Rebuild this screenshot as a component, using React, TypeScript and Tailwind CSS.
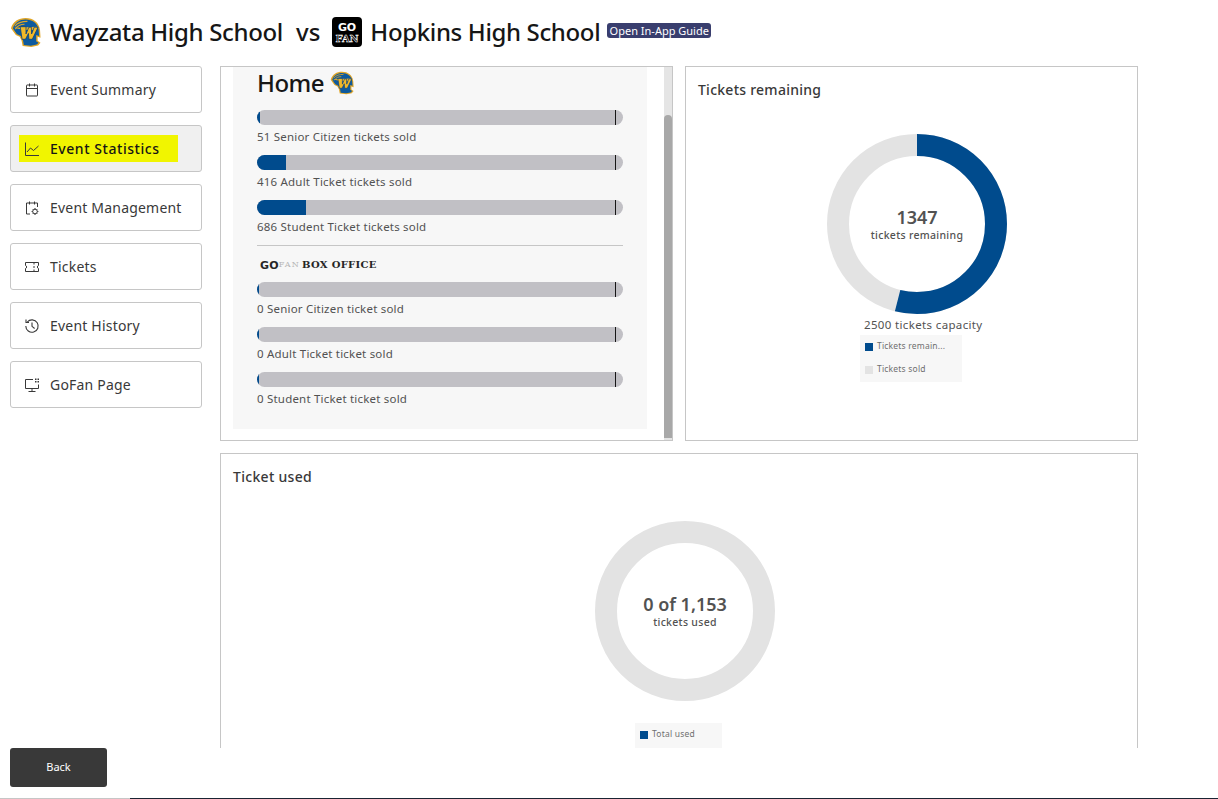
import React from "react";

const font = { fontFamily: '"Noto Sans", sans-serif' };

function Helmet({ className }: { className: string }) {
  return (
    <svg viewBox="0 0 32 31" className={className}>
      <path d="M1 11 C3 4 9 0.5 16 0.5 C24 0.5 30 5 31 13 L31.5 21 L28.5 20 L28.5 24 L31.5 26 L29 29 L22 30.5 L13 29.5 L12 24 L10 20 L6 18 L3 14 Z" fill="#e0a526" />
      <path d="M3 11 C5 5 10 2 16 2 C23 2 29 6 29.6 13 L30 19 L27 18 L27 24.5 L29.5 26 L27.5 28 L21.5 29.3 L14.3 28.4 L13.4 23.5 L11.2 19 L7 17 L4.5 13.5 Z" fill="#0d5a9e" />
      <path d="M5 9 C8 5 13 4 18 4 M5.5 12 C8 8 12 7 15 7" stroke="#e0a526" strokeWidth="1.1" fill="none" />
      <path d="M4 10.5 L28 9.5 L25 13 H14 Z" fill="#e8b02c" />
      <path d="M10.5 9.5 H16.5 L16.5 17 L19.5 10 H22 L22.3 17 L25 10 H29 L23 22.5 H19.5 L19 16.5 L16 22.5 H12.5 Z" fill="#f2b928" stroke="#0b3f78" strokeWidth="0.8" />
    </svg>
  );
}

function GoFanLogo() {
  return (
    <svg viewBox="0 0 30 30" className="w-[30px] h-[30px] shrink-0">
      <rect width="30" height="30" rx="4" fill="#000" />
      <text x="15" y="14" textAnchor="middle" fontSize="11" fontWeight="700" fill="#fff" letterSpacing="-0.3" fontFamily="DejaVu Sans, sans-serif">GO</text>
      <text x="15" y="25" textAnchor="middle" fontSize="10" fontWeight="700" fill="#000" stroke="#fff" strokeWidth="0.5" letterSpacing="-0.2" fontFamily="DejaVu Serif, serif">FAN</text>
    </svg>
  );
}

const ic = "w-4 h-4 shrink-0 text-[#393939]";

const CalendarIcon = () => (
  <svg viewBox="0 0 16 16" className={ic} fill="none" stroke="currentColor" strokeWidth="1">
    <rect x="2.5" y="3" width="11" height="11" rx="0.5" />
    <path d="M2.5 6.5 H13.5 M5.5 1.5 V4.5 M10.5 1.5 V4.5" />
  </svg>
);
const ChartIcon = () => (
  <svg viewBox="0 0 16 16" className={ic} fill="none" stroke="currentColor" strokeWidth="1">
    <path d="M1.5 1.5 V14.5 H15" />
    <path d="M3 11 L6.5 7 L9.5 9.5 L14.5 5" />
  </svg>
);
const ManageIcon = () => (
  <svg viewBox="0 0 16 16" className={ic} fill="none" stroke="currentColor" strokeWidth="1">
    <path d="M6 14 H2.5 V3 H13.5 V7" />
    <path d="M5.5 1.5 V4.5 M10.5 1.5 V4.5" />
    <circle cx="11" cy="11.5" r="2.3" />
    <path d="M11 8 V9 M11 14 V15 M7.6 11.5 H8.7 M13.3 11.5 H14.4 M8.7 9.2 L9.4 9.9 M12.6 13.1 L13.3 13.8 M8.7 13.8 L9.4 13.1 M12.6 9.9 L13.3 9.2" />
  </svg>
);
const TicketIcon = () => (
  <svg viewBox="0 0 16 16" className={ic} fill="none" stroke="currentColor" strokeWidth="1">
    <path d="M1.5 3.5 H14.5 V6.5 C13 6.7 13 9.3 14.5 9.5 V12.5 H1.5 V9.5 C3 9.3 3 6.7 1.5 6.5 Z" />
    <path d="M10 3.5 V5.5 M10 7 V9 M10 10.5 V12.5" />
  </svg>
);
const HistoryIcon = () => (
  <svg viewBox="0 0 16 16" className={ic} fill="none" stroke="currentColor" strokeWidth="1.1">
    <path d="M3.3 4 A6.2 6.2 0 1 1 1.8 8" />
    <path d="M2 1.5 V4.5 H5" />
    <path d="M8 4.5 V8.3 L10.6 10.5" />
  </svg>
);
const MonitorIcon = () => (
  <svg viewBox="0 0 16 16" className={ic} fill="none" stroke="currentColor" strokeWidth="1">
    <path d="M9 2.5 H1.5 V11.5 H14.5 V7.5" />
    <path d="M8 11.5 V14.5 M4.5 14.5 H11.5" />
    <path d="M11 1.5 H12.5 V3 H11 Z M13.5 1.5 H15 V3 H13.5 Z M11 4 H12.5 V5.5 H11 Z M13.5 4 H15 V5.5 H13.5 Z" fill="currentColor" stroke="none" />
  </svg>
);

const navItems = [
  { label: "Event Summary", icon: <CalendarIcon /> },
  { label: "Event Statistics", icon: <ChartIcon />, active: true },
  { label: "Event Management", icon: <ManageIcon /> },
  { label: "Tickets", icon: <TicketIcon /> },
  { label: "Event History", icon: <HistoryIcon /> },
  { label: "GoFan Page", icon: <MonitorIcon /> },
];

function Sidebar() {
  return (
    <nav className="w-[192px] shrink-0 flex flex-col gap-3">
      {navItems.map((it) =>
        it.active ? (
          <div key={it.label} className="h-[47px] rounded-[3px] border border-[#c6c6c6] bg-[#f0f0f0] flex items-center pl-2">
            <div className="w-[159px] h-[27px] bg-[#f1f500] flex items-center gap-[10px] pl-[5px] text-[14px] font-medium tracking-[0.55px] text-[#161616]">
              {it.icon}
              <span>{it.label}</span>
            </div>
          </div>
        ) : (
          <div key={it.label} className="h-[47px] rounded-[3px] border border-[#c6c6c6] bg-white flex items-center gap-[10px] pl-[13px] text-[14px] tracking-[0.2px] text-[#393939]">
            {it.icon}
            <span>{it.label}</span>
          </div>
        )
      )}
    </nav>
  );
}

function Bar({ pct, label }: { pct: number; label: string }) {
  return (
    <div className="h-[45px]">
      <div className="relative h-[15px] rounded-full bg-[#c1c0c5] overflow-hidden">
        <div className="h-full bg-[#004b8d]" style={{ width: `${pct}%` }} />
        <div className="absolute top-0 bottom-0 left-[358px] w-[1px] bg-[#161616]" />
      </div>
      <div className="mt-[4px] text-[11.5px] leading-[16px] tracking-[0.2px] text-[#525252] whitespace-nowrap">{label}</div>
    </div>
  );
}

function HomePanel() {
  return (
    <div className="w-[453px] h-[375px] border border-[#c6c6c6] bg-white flex overflow-hidden">
      <div className="w-[444px] pl-3">
        <div className="w-[414px] h-[362px] bg-[#f7f7f7] px-6">
          <div className="flex items-center gap-[6px] h-[32px] mb-[11px]">
            <span className="text-[24px] font-medium leading-[32px] tracking-[-0.5px] text-[#161616]">Home</span>
            <Helmet className="w-[24px] h-[24px]" />
          </div>
          <Bar pct={0.9} label="51 Senior Citizen tickets sold" />
          <Bar pct={8} label="416 Adult Ticket tickets sold" />
          <Bar pct={13.4} label="686 Student Ticket tickets sold" />
          <div className="border-t border-[#c6c6c6] pt-[11px] h-[37px]">
            <div className="flex items-center h-[16px] leading-none text-[#262626] whitespace-nowrap" style={{ fontFamily: '"DejaVu Serif", serif' }}>
              <span className="text-[11px] font-bold ml-[3px] tracking-[0.2px]" style={{ fontFamily: '"DejaVu Sans", sans-serif' }}>GO</span>
              <span className="text-[8px] text-[#b5b5b5] tracking-[1.2px]">FAN</span>
              <span className="text-[10px] font-bold ml-[2px] tracking-[0.3px]">BOX OFFICE</span>
            </div>
          </div>
          <Bar pct={0.6} label="0 Senior Citizen ticket sold" />
          <Bar pct={0.6} label="0 Adult Ticket ticket sold" />
          <Bar pct={0.6} label="0 Student Ticket ticket sold" />
        </div>
      </div>
      <div className="w-[8px] h-full bg-[#e5e5e5] flex flex-col">
        <div className="h-[48px] shrink-0" />
        <div className="h-[323px] bg-[#a8a8a8] rounded-t-[4px]" />
      </div>
    </div>
  );
}

function Donut({ fraction }: { fraction: number }) {
  const r = 79;
  const c = 2 * Math.PI * r;
  return (
    <svg viewBox="0 0 180 180" className="w-[180px] h-[180px] block" fill="none">
      <circle cx="90" cy="90" r={r} stroke="#e3e3e3" strokeWidth="22" />
      {fraction > 0 && (
        <circle
          cx="90"
          cy="90"
          r={r}
          stroke="#004b8d"
          strokeWidth="22"
          strokeDasharray={`${c * fraction} ${c}`}
          transform="rotate(-90 90 90)"
        />
      )}
    </svg>
  );
}

function LegendRow({ color, label }: { color: string; label: string }) {
  return (
    <div className="flex items-center gap-1 h-[23px] pl-[5px] text-[8.5px] tracking-[0.2px] text-[#6f6f6f] whitespace-nowrap">
      <span className="w-2 h-2 shrink-0" style={{ background: color }} />
      <span>{label}</span>
    </div>
  );
}

function RemainingPanel() {
  return (
    <div className="w-[453px] h-[375px] border border-[#c6c6c6] bg-white flex flex-col">
      <div className="pl-3 pt-[13px] text-[14px] leading-[20px] font-medium tracking-[0.25px] text-[#393939]">Tickets remaining</div>
      <div className="mt-[34px] ml-[141px] w-[180px] h-[180px] grid place-items-center">
        <div className="[grid-area:1/1]"><Donut fraction={0.5388} /></div>
        <div className="[grid-area:1/1] text-center mt-[-1px] text-[#525252]">
          <div className="text-[18px] leading-[22px] font-semibold">1347</div>
          <div className="text-[10.5px] leading-[14px] font-medium tracking-[0.3px]">tickets remaining</div>
        </div>
      </div>
      <div className="ml-[178px] mt-[3px] text-[11.5px] leading-[16px] tracking-[0.35px] text-[#525252] whitespace-nowrap">2500 tickets capacity</div>
      <div className="ml-[174px] mt-[2px] w-[102px] h-[47px] bg-[#f7f7f7]">
        <LegendRow color="#004b8d" label="Tickets remain..." />
        <LegendRow color="#e3e3e3" label="Tickets sold" />
      </div>
    </div>
  );
}

function UsedPanel() {
  return (
    <div className="w-[918px] h-[330px] shrink-0 border border-b-0 border-[#c6c6c6] bg-white flex flex-col">
      <div className="pl-3 pt-[13px] text-[14px] leading-[20px] font-medium tracking-[0.3px] text-[#393939]">Ticket used</div>
      <div className="mt-[34px] w-[180px] h-[180px] grid place-items-center ml-[374px]">
        <div className="[grid-area:1/1]"><Donut fraction={0} /></div>
        <div className="[grid-area:1/1] text-center mt-[-1px] text-[#525252]">
          <div className="text-[18px] leading-[22px] font-semibold">0 of 1,153</div>
          <div className="text-[10.5px] leading-[14px] font-medium tracking-[0.3px]">tickets used</div>
        </div>
      </div>
      <div className="mt-[22px] ml-[414px] w-[87px] h-[25px] bg-[#f7f7f7]">
        <LegendRow color="#004b8d" label="Total used" />
      </div>
    </div>
  );
}

export default function App() {
  return (
    <div className="w-[1218px] h-[799px] bg-white flex flex-col overflow-hidden" style={font}>
      <header className="h-[66px] shrink-0 flex items-center pl-[10px] pb-[2px] text-[#161616]">
        <Helmet className="w-[31px] h-[31px]" />
        <h1 className="ml-[9px] text-[24px] font-medium leading-[32px] tracking-[-0.33px] whitespace-nowrap">Wayzata High School</h1>
        <span className="ml-[13px] mr-[12px] text-[24px] font-medium leading-[32px]">vs</span>
        <GoFanLogo />
        <h1 className="ml-[8px] text-[24px] font-medium leading-[32px] tracking-[-0.36px] whitespace-nowrap">Hopkins High School</h1>
        <span className="ml-[7px] mb-[3px] h-[15px] w-[104px] rounded-[3px] bg-[#393e6e] text-white text-[11px] leading-[15px] text-center whitespace-nowrap">Open In-App Guide</span>
      </header>
      <div className="flex-1 min-h-0 flex pl-[10px] gap-[18px]">
        <Sidebar />
        <main className="flex flex-col gap-3 overflow-hidden">
          <div className="flex gap-3">
            <HomePanel />
            <RemainingPanel />
          </div>
          <UsedPanel />
        </main>
      </div>
      <footer className="h-[51px] shrink-0 flex flex-col">
        <div className="flex-1 pl-[10px]">
          <button className="w-[97px] h-[39px] rounded-[3px] bg-[#393939] text-white text-[11px]">Back</button>
        </div>
        <div className="h-[1px] flex">
          <div className="w-[130px] bg-[#c6c6c6]" />
          <div className="flex-1 bg-[#1a2433]" />
        </div>
      </footer>
    </div>
  );
}
